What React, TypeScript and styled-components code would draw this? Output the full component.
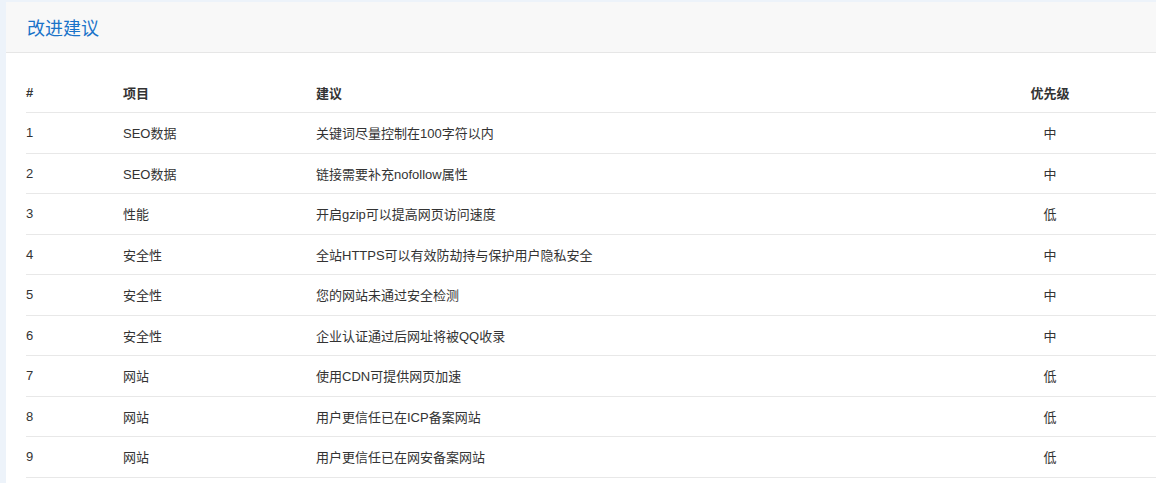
import React from "react";
import styled, { createGlobalStyle } from "styled-components";

const Global = createGlobalStyle`
  html, body { margin: 0; padding: 0; }
  body {
    background: #edf3fa;
    overflow: hidden;
    font-family: "Liberation Sans", "Noto Sans CJK SC", sans-serif;
  }
`;

const Page = styled.div`
  padding: 2px 0 0 6px;
  width: 1150px;
`;

const Card = styled.section`
  background: #fff;
  min-height: 481px;
`;

const CardHeader = styled.header`
  height: 51px;
  box-sizing: border-box;
  background: #f8f8f8;
  border-bottom: 1px solid #e6e6e6;
  display: flex;
  align-items: center;
  padding-left: 21px;
`;

const Title = styled.h2`
  margin: 0;
  font-size: 18px;
  font-weight: 400;
  color: #1a73c9;
  font-family: "Noto Sans CJK SC", sans-serif;
`;

const Body = styled.div`
  padding: 20px 0 0 20px;
`;

const Table = styled.table`
  width: 100%;
  border-collapse: collapse;
  table-layout: fixed;
  font-size: 13px;
  color: #333;
`;

const Th = styled.th<{ $w?: number; $center?: boolean }>`
  width: ${(p) => (p.$w ? `${p.$w}px` : "auto")};
  text-align: ${(p) => (p.$center ? "center" : "left")};
  font-weight: 700;
  height: 39px;
  padding: 0;
  border-bottom: 1px solid #e8e8e8;
  color: #333;
`;

const Td = styled.td<{ $center?: boolean }>`
  text-align: ${(p) => (p.$center ? "center" : "left")};
  height: 39.5px;
  padding: 0;
  border-bottom: 1px solid #e8e8e8;
`;

const rows = [
  ["1", "SEO数据", "关键词尽量控制在100字符以内", "中"],
  ["2", "SEO数据", "链接需要补充nofollow属性", "中"],
  ["3", "性能", "开启gzip可以提高网页访问速度", "低"],
  ["4", "安全性", "全站HTTPS可以有效防劫持与保护用户隐私安全", "中"],
  ["5", "安全性", "您的网站未通过安全检测", "中"],
  ["6", "安全性", "企业认证通过后网址将被QQ收录", "中"],
  ["7", "网站", "使用CDN可提供网页加速", "低"],
  ["8", "网站", "用户更信任已在ICP备案网站", "低"],
  ["9", "网站", "用户更信任已在网安备案网站", "低"],
];

export default function App() {
  return (
    <>
      <Global />
      <Page>
        <Card>
          <CardHeader>
            <Title>改进建议</Title>
          </CardHeader>
          <Body>
            <Table>
              <thead>
                <tr>
                  <Th $w={97}>#</Th>
                  <Th $w={193}>项目</Th>
                  <Th>建议</Th>
                  <Th $w={212} $center>优先级</Th>
                </tr>
              </thead>
              <tbody>
                {rows.map((r) => (
                  <tr key={r[0]}>
                    <Td>{r[0]}</Td>
                    <Td>{r[1]}</Td>
                    <Td>{r[2]}</Td>
                    <Td $center>{r[3]}</Td>
                  </tr>
                ))}
              </tbody>
            </Table>
          </Body>
        </Card>
      </Page>
    </>
  );
}
